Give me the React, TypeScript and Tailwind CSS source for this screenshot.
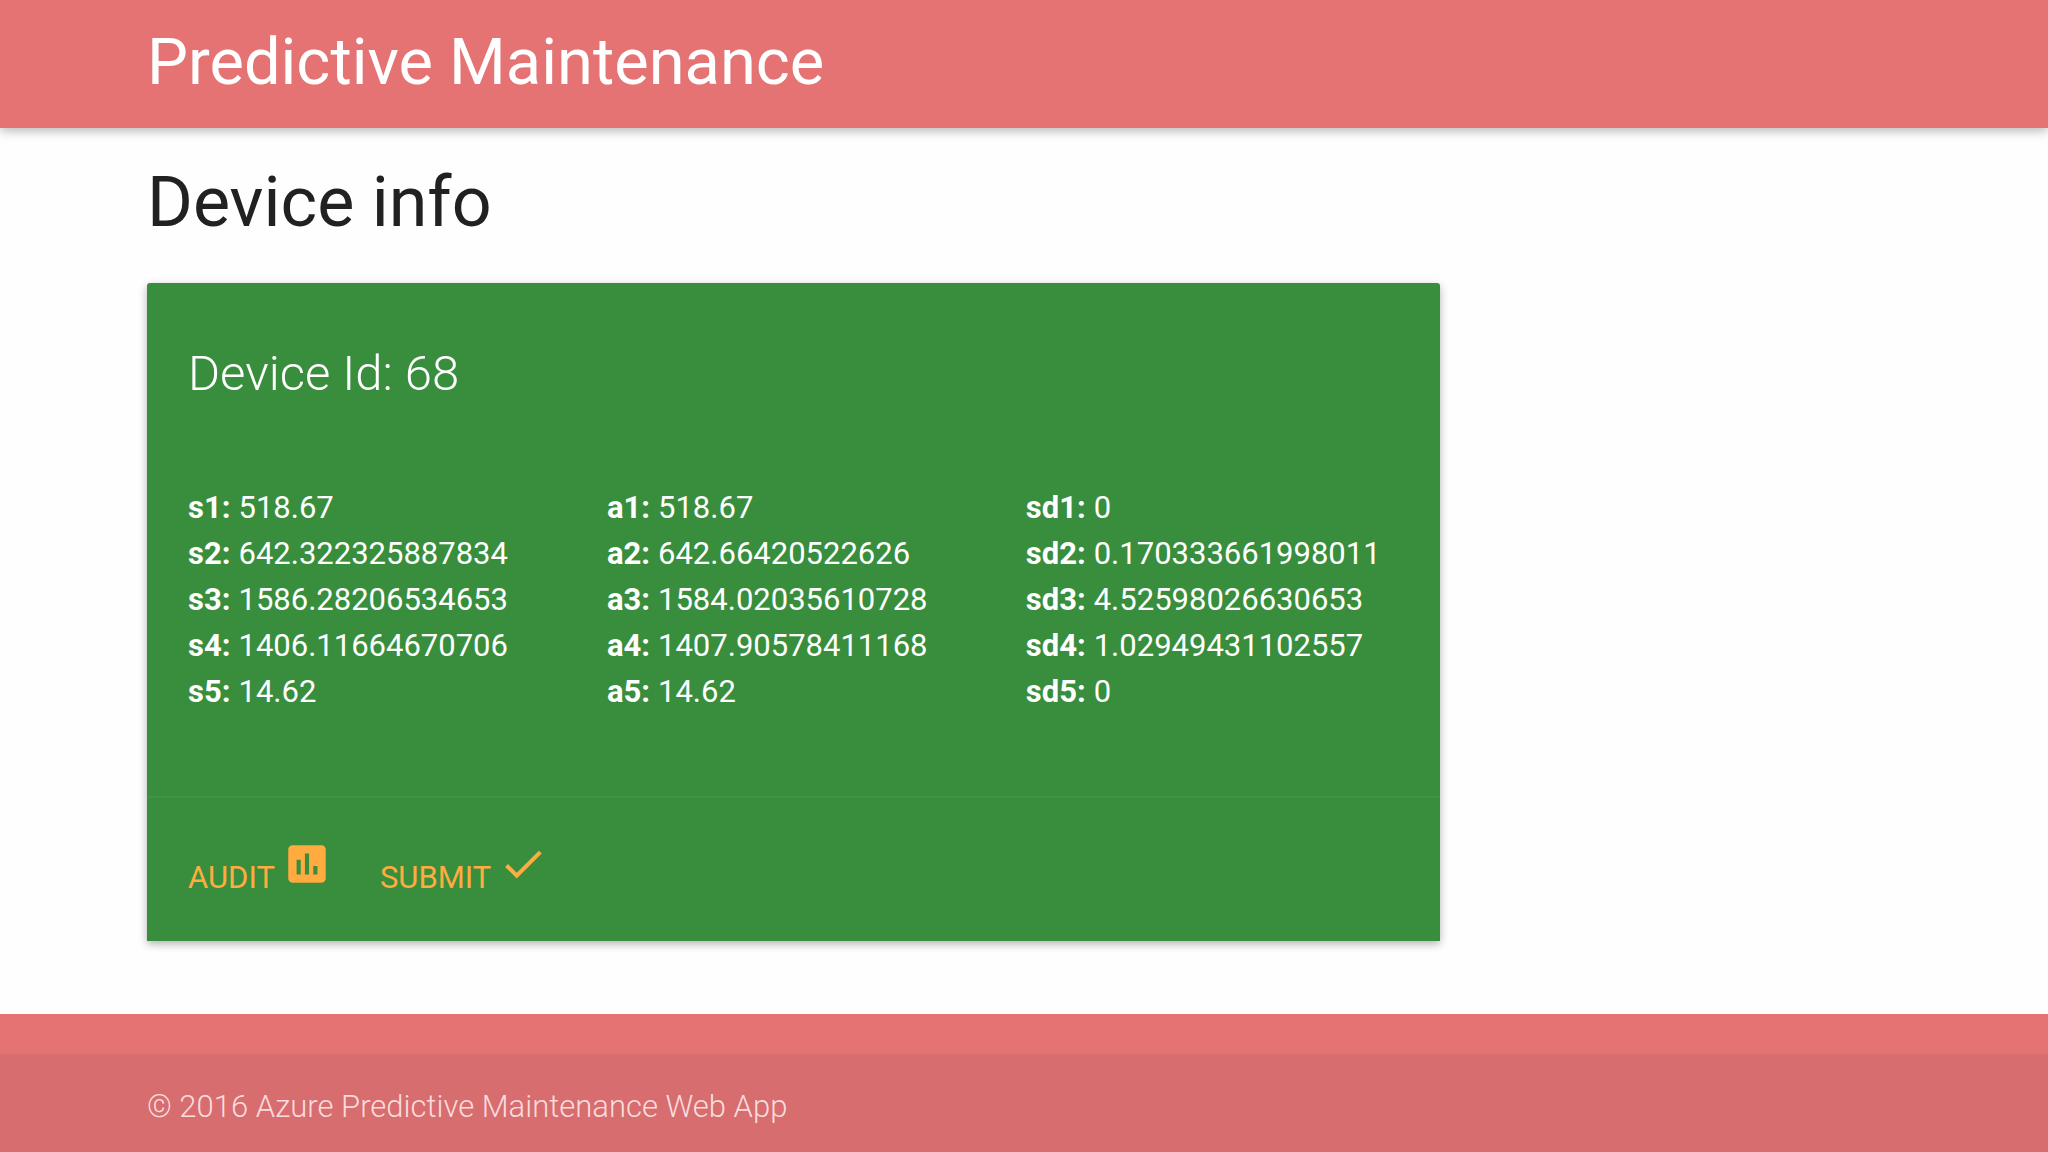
import { MdAssessment, MdDone } from 'react-icons/md';

const columns = [
  [
    { label: 's1', value: '518.67' },
    { label: 's2', value: '642.322325887834' },
    { label: 's3', value: '1586.28206534653' },
    { label: 's4', value: '1406.11664670706' },
    { label: 's5', value: '14.62' },
  ],
  [
    { label: 'a1', value: '518.67' },
    { label: 'a2', value: '642.66420522626' },
    { label: 'a3', value: '1584.02035610728' },
    { label: 'a4', value: '1407.90578411168' },
    { label: 'a5', value: '14.62' },
  ],
  [
    { label: 'sd1', value: '0' },
    { label: 'sd2', value: '0.170333661998011' },
    { label: 'sd3', value: '4.52598026630653' },
    { label: 'sd4', value: '1.02949431102557' },
    { label: 'sd5', value: '0' },
  ],
];

export default function App() {
  return (
    <div className="min-h-screen flex flex-col bg-[#fefefe] font-['Roboto',sans-serif] text-[#212121]">
      {/* Header */}
      <header className="relative bg-[#e57373] shadow-[0_3px_10px_rgba(0,0,0,0.28)]">
        <div className="px-[147px] pt-[22px] pb-[26px]">
          <a href="#" className="block text-white text-[65px] leading-[80px]">Predictive Maintenance</a>
        </div>
      </header>

      <main className="flex-1 px-[147px] pt-[34px]">
        <h1 className="text-[70px] leading-[80px]">Device info</h1>

        {/* Device card */}
        <section className="mt-[41px] w-[73.7%] rounded-t-[3px] bg-[#388e3c] text-white shadow-[0_3px_8px_rgba(0,0,0,0.3)]">
          <div className="px-[41px] pt-[59px] pb-[81px]">
            <h2 className="text-[49px] leading-[64px] font-light">Device Id: 68</h2>
            <div className="mt-[79px] grid grid-cols-3 gap-[46px]">
              {columns.map((rows) => (
                <dl key={rows[0].label} className="text-[31px] leading-[46px] whitespace-nowrap">
                  {rows.map((row) => (
                    <div key={row.label} className="flex gap-2">
                      <dt className="font-bold">{row.label}:</dt>
                      <dd>{row.value}</dd>
                    </div>
                  ))}
                </dl>
              ))}
            </div>
          </div>
          <div className="flex gap-12 border-t-2 border-[#439146] px-[41px] pt-[41px] pb-[33px] text-[31px] leading-[60px] text-[#ffab40]">
            <button type="button" className="flex gap-[7px] uppercase">
              <span className="pt-[9px]">Audit</span>
              <MdAssessment className="size-[50px]" />
            </button>
            <button type="button" className="flex gap-[7px] uppercase">
              <span className="pt-[9px]">Submit</span>
              <MdDone className="size-[50px]" />
            </button>
          </div>
        </section>
      </main>

      {/* Footer */}
      <footer className="bg-[#e57373] pt-10 font-light text-[#f9dcdc]">
        <div className="bg-[#d76d6f] px-[147px] pt-[29px] pb-[21px] text-[31px] leading-[48px]">
          © 2016 Azure Predictive Maintenance Web App
        </div>
      </footer>
    </div>
  );
}
